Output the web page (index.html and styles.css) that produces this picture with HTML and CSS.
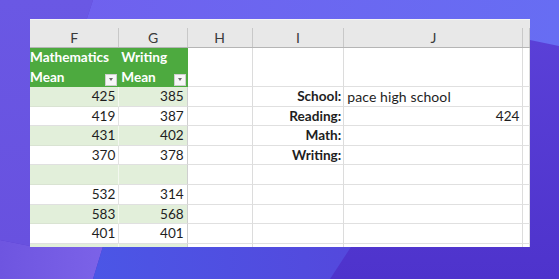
FILE: index.html
```html
<!DOCTYPE html>
<html lang="en">
<head>
<meta charset="utf-8">
<title>Sheet</title>
<link rel="stylesheet" href="styles.css">
</head>
<body>
<div class="stage">
  <svg class="bg" viewBox="0 0 559 279" width="559" height="279" aria-hidden="true">
    <defs>
      <linearGradient id="gBase" x1="0" y1="0" x2="0" y2="1">
        <stop offset="0" stop-color="#5c42d9"/>
        <stop offset="1" stop-color="#4e33cc"/>
      </linearGradient>
      <linearGradient id="gTop" x1="0" y1="0" x2="1" y2="0">
        <stop offset="0" stop-color="#6f61ee"/>
        <stop offset="1" stop-color="#676df3"/>
      </linearGradient>
      <linearGradient id="gLeft" x1="0" y1="0" x2="0" y2="1">
        <stop offset="0" stop-color="#6a58e4"/>
        <stop offset="1" stop-color="#6851df"/>
      </linearGradient>
      <linearGradient id="gLilac" x1="0" y1="0" x2="1" y2="0">
        <stop offset="0" stop-color="#6e55e0"/>
        <stop offset="1" stop-color="#7c63e8"/>
      </linearGradient>
      <linearGradient id="gBlue" x1="0" y1="0" x2="1" y2="0">
        <stop offset="0" stop-color="#4b56e6"/>
        <stop offset="1" stop-color="#5448dc"/>
      </linearGradient>
    </defs>
    <rect x="0" y="0" width="559" height="279" fill="url(#gBase)"/>
    <polygon points="93,0 559,0 559,46 530,40 80,40" fill="url(#gTop)"/>
    <polygon points="0,0 93,0 80,40 40,150 30,246 0,240" fill="url(#gLeft)"/>
    <polygon points="0,240 30,246 108,230 93,279 0,279" fill="url(#gLilac)"/>
    <polygon points="108,230 362,230 330,279 93,279" fill="url(#gBlue)"/>
  </svg>

  <div class="sheet">
    <div class="ch"><span>F</span></div>
    <div class="ch"><span>G</span></div>
    <div class="ch"><span>H</span></div>
    <div class="ch"><span>I</span></div>
    <div class="ch"><span>J</span></div>
    <div class="ch"><span></span></div>

    <div class="c thead first"><span>Mathematics</span><span class="line2">Mean<i class="flt"></i></span></div>
    <div class="c thead second"><span>Writing</span><span class="line2">Mean<i class="flt"></i></span></div>
    <div class="c"></div>
    <div class="c"></div>
    <div class="c"></div>
    <div class="c k"></div>

    <div class="c num band f">425</div>
    <div class="c num band g">385</div>
    <div class="c"></div>
    <div class="c lbl">School:</div>
    <div class="c txt">pace high school</div>
    <div class="c k"></div>

    <div class="c num f">419</div>
    <div class="c num g">387</div>
    <div class="c"></div>
    <div class="c lbl">Reading:</div>
    <div class="c num">424</div>
    <div class="c k"></div>

    <div class="c num band f">431</div>
    <div class="c num band g">402</div>
    <div class="c"></div>
    <div class="c lbl">Math:</div>
    <div class="c"></div>
    <div class="c k"></div>

    <div class="c num f">370</div>
    <div class="c num g">378</div>
    <div class="c"></div>
    <div class="c lbl">Writing:</div>
    <div class="c"></div>
    <div class="c k"></div>

    <div class="c num band f"></div>
    <div class="c num band g"></div>
    <div class="c"></div>
    <div class="c"></div>
    <div class="c"></div>
    <div class="c k"></div>

    <div class="c num f">532</div>
    <div class="c num g">314</div>
    <div class="c"></div>
    <div class="c"></div>
    <div class="c"></div>
    <div class="c k"></div>

    <div class="c num band f">583</div>
    <div class="c num band g">568</div>
    <div class="c"></div>
    <div class="c"></div>
    <div class="c"></div>
    <div class="c k"></div>

    <div class="c num f">401</div>
    <div class="c num g">401</div>
    <div class="c"></div>
    <div class="c"></div>
    <div class="c"></div>
    <div class="c k"></div>

    <div class="c num band f"></div>
    <div class="c num band g"></div>
    <div class="c"></div>
    <div class="c"></div>
    <div class="c"></div>
    <div class="c k"></div>
  </div>
</div>
</body>
</html>
```

FILE: styles.css
```css
html, body {
  margin: 0;
  padding: 0;
}

body {
  width: 559px;
  height: 279px;
  overflow: hidden;
  font-family: Lato, "Open Sans", "Liberation Sans", sans-serif;
}

.stage {
  display: grid;
  width: 559px;
  height: 279px;
  overflow: hidden;
}

.bg {
  grid-area: 1 / 1;
  display: block;
}

.sheet {
  grid-area: 1 / 1;
  align-self: start;
  justify-self: start;
  margin: 19px 0 0 30px;
  width: 500px;
  height: 228px;
  overflow: hidden;
  background: #ffffff;
  display: grid;
  grid-template-columns: 89.3px 68.4px 65px 91.6px 179.2px 1fr;
  grid-template-rows: 29px 39px repeat(9, 19.6px);
  font-size: 13.6px;
  color: #1e1e1e;
}

/* column letters */
.ch {
  display: flex;
  align-items: flex-end;
  background: #e8e8e8;
  border-top: 1px solid #f4f4f4;
  border-bottom: 1px solid #b5b5b5;
  box-sizing: border-box;
}

.ch span {
  display: block;
  width: 100%;
  height: 19px;
  line-height: 19px;
  text-align: center;
  color: #3a3a3a;
  font-size: 14px;
  border-right: 1px solid #c8c8c8;
  box-sizing: border-box;
}

/* cells */
.c {
  box-sizing: border-box;
  border-right: 1px solid #dcdcdc;
  border-bottom: 1px solid #e0e0e0;
  padding: 0 3px;
  line-height: 19.6px;
  white-space: nowrap;
  overflow: hidden;
}

.k {
  padding: 0;
}

.num {
  text-align: right;
}

.txt {
  font-size: 14px;
  letter-spacing: 0.1px;
}

.lbl {
  text-align: right;
  font-weight: 700;
  padding-right: 2px;
}

.band {
  background: #e2efda;
}

.f.band {
  border-right-color: #f3f8ef;
  border-bottom-color: #d9e3d2;
}

.f {
  border-right-color: #e2e2e2;
}

.g {
  border-right-color: #cfcfcf;
}

/* table header */
.thead {
  display: flex;
  flex-direction: column;
  justify-content: flex-end;
  background: #4daa3f;
  color: #ffffff;
  font-weight: 700;
  line-height: 19.5px;
  border-right: 0;
  border-bottom: 0;
  padding: 0 2px 0 2px;
}

.thead.first {
  padding-left: 0;
}

.line2 {
  display: flex;
  align-items: center;
  height: 19.5px;
}

.flt {
  margin-left: auto;
  align-self: flex-end;
  margin-bottom: 1.5px;
  width: 12px;
  height: 12px;
  box-sizing: border-box;
  background: #f7f7f7;
  border: 1px solid #cfcfcf;
  display: grid;
  place-items: center;
}

.flt::after {
  content: "";
  width: 0;
  height: 0;
  border-left: 2.5px solid transparent;
  border-right: 2.5px solid transparent;
  border-top: 3px solid #6a6a6a;
}
```
